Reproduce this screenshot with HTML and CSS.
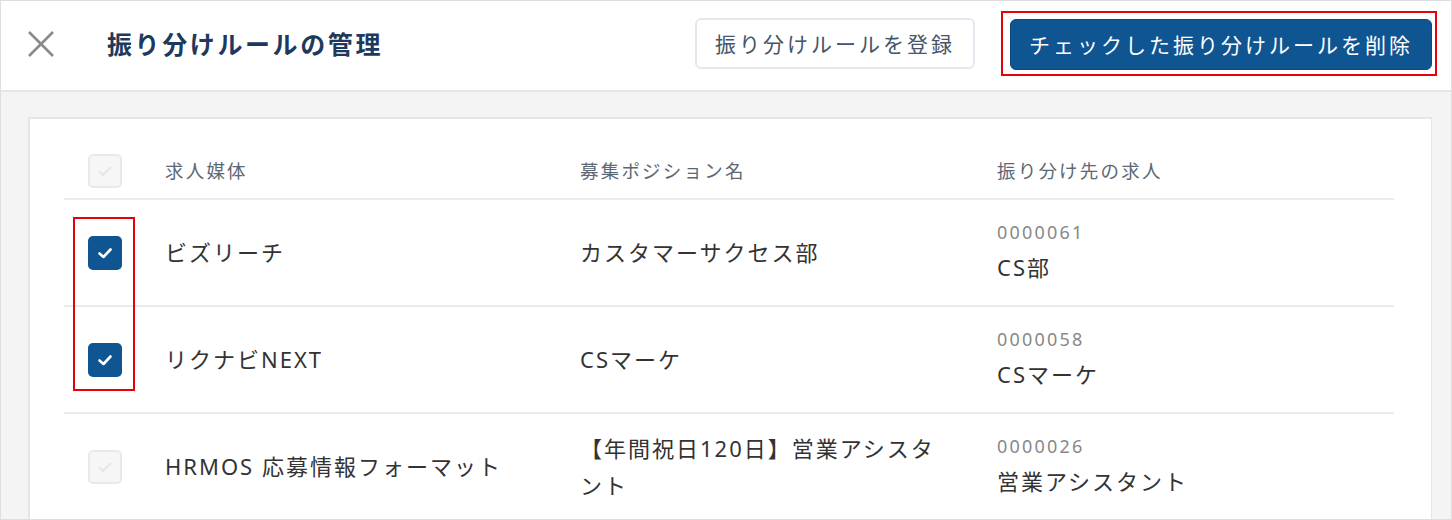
FILE: index.html
```html
<html>

<head>
    <title>振り分けルールの管理</title>
    <link rel="stylesheet" href="styles.css">
</head>

<body>
    <div class="frame">
        <div class="header">
            <div class="close">
                <svg width="28" height="28" viewBox="0 0 28 28"><path d="M2 2 L26 26 M26 2 L2 26" stroke="#8a8a8a" stroke-width="2.6" fill="none"/></svg>
            </div>
            <h1 class="title">振り分けルールの管理</h1>
            <button class="btn btn-outline">振り分けルールを登録</button>
            <span class="mark mark-btn">
                <button class="btn btn-primary">チェックした振り分けルールを削除</button>
            </span>
        </div>

        <div class="content">
            <div class="card">
                <div class="row head">
                    <div class="cell"><span class="check off"><svg width="16" height="12" viewBox="0 0 16 12"><path d="M2 6 L6 10 L14 2" stroke="#e6e6e6" stroke-width="2" fill="none"/></svg></span></div>
                    <div class="cell">求人媒体</div>
                    <div class="cell">募集ポジション名</div>
                    <div class="cell">振り分け先の求人</div>
                </div>
                <div class="rows">
                    <div class="row">
                        <div class="cell"><span class="check on"><svg width="16" height="12" viewBox="0 0 16 12"><path d="M2.5 6.5 L6.5 10 L13.5 2.5" stroke="#fff" stroke-width="2.6" fill="none" stroke-linecap="round" stroke-linejoin="round"/></svg></span></div>
                        <div class="cell">ビズリーチ</div>
                        <div class="cell">カスタマーサクセス部</div>
                        <div class="cell target">
                            <div class="job-id">0000061</div>
                            <div>CS部</div>
                        </div>
                    </div>
                    <div class="row">
                        <div class="cell"><span class="check on"><svg width="16" height="12" viewBox="0 0 16 12"><path d="M2.5 6.5 L6.5 10 L13.5 2.5" stroke="#fff" stroke-width="2.6" fill="none" stroke-linecap="round" stroke-linejoin="round"/></svg></span></div>
                        <div class="cell">リクナビNEXT</div>
                        <div class="cell">CSマーケ</div>
                        <div class="cell target">
                            <div class="job-id">0000058</div>
                            <div>CSマーケ</div>
                        </div>
                    </div>
                    <div class="row">
                        <div class="cell"><span class="check off"><svg width="16" height="12" viewBox="0 0 16 12"><path d="M2 6 L6 10 L14 2" stroke="#e6e6e6" stroke-width="2" fill="none"/></svg></span></div>
                        <div class="cell">HRMOS 応募情報フォーマット</div>
                        <div class="cell"><span class="wrap">【年間祝日120日】営業アシスタント</span></div>
                        <div class="cell target">
                            <div class="job-id">0000026</div>
                            <div>営業アシスタント</div>
                        </div>
                    </div>
                    <div class="mark mark-checks"></div>
                </div>
            </div>
        </div>
    </div>
</body>

</html>
```

FILE: styles.css
```css
:root {
    --navy: #0f5592;
    --title: #1d3a5e;
    --line: #ebebeb;
    --mark: #e8000d;
}

body {
    margin: 0;
    font-family: "Noto Sans", "Noto Sans CJK JP", sans-serif;
    color: #333;
}

.frame {
    height: 520px;
    box-sizing: border-box;
    border: 1px solid #dedede;
    overflow: hidden;
    background-color: #f4f4f4;
}

.header {
    display: flex;
    align-items: center;
    height: 84px;
    padding: 0 14px 5px 26px;
    background-color: white;
    border-bottom: 2px solid #e6e6e6;
}

.close {
    display: flex;
    width: 28px;
    height: 28px;
    margin-top: 2px;
}

.title {
    flex: 1;
    margin: 0 0 0 52px;
    font-size: 25px;
    font-weight: bold;
    letter-spacing: 2.6px;
    color: var(--title);
}

.btn {
    font-family: inherit;
    font-size: 21px;
    letter-spacing: 3px;
    height: 51px;
    border-radius: 6px;
    cursor: pointer;
}

.btn-outline {
    width: 280px;
    margin-right: 26px;
    background-color: white;
    border: 2px solid #e4e9ef;
    color: #45556a;
}

.btn-primary {
    width: 422px;
    background-color: var(--navy);
    border: 1px solid #0c4a80;
    color: white;
}

.mark {
    border: 2px solid var(--mark);
}

.mark-btn {
    display: flex;
    padding: 6px 3px 4px 7px;
}

.content {
    padding: 25px 19px 0 27px;
}

.card {
    background-color: white;
    border: 2px solid #e6e6e6;
    border-right-width: 1px;
    padding: 0 37px 0 34px;
    height: 420px;
}

.row {
    display: grid;
    grid-template-columns: 101px 415px 417px 1fr;
    align-items: center;
    min-height: 105px;
    border-bottom: 2px solid var(--line);
    font-size: 22px;
    letter-spacing: 2px;
}

.row.head {
    min-height: 0;
    padding: 33px 0 9px;
    font-size: 18.5px;
    letter-spacing: 2.2px;
    color: #5d6875;
}

.cell {
    line-height: 37px;
}

.check {
    display: flex;
    justify-content: center;
    align-items: center;
    width: 34px;
    height: 34px;
    margin-left: 24px;
    box-sizing: border-box;
    border-radius: 5px;
}

.check.on {
    background-color: var(--navy);
}

.check.off {
    background-color: #f6f6f6;
    border: 2px solid #e9e9e9;
}

.wrap {
    display: block;
    width: 372px;
}

.target {
    line-height: 35px;
    margin-top: -6px;
}

.job-id {
    font-size: 18px;
    letter-spacing: 2.2px;
    color: #888;
}

.rows {
    position: relative;
}

.mark-checks {
    position: absolute;
    left: 9px;
    top: 17px;
    width: 58px;
    height: 170px;
}
```
